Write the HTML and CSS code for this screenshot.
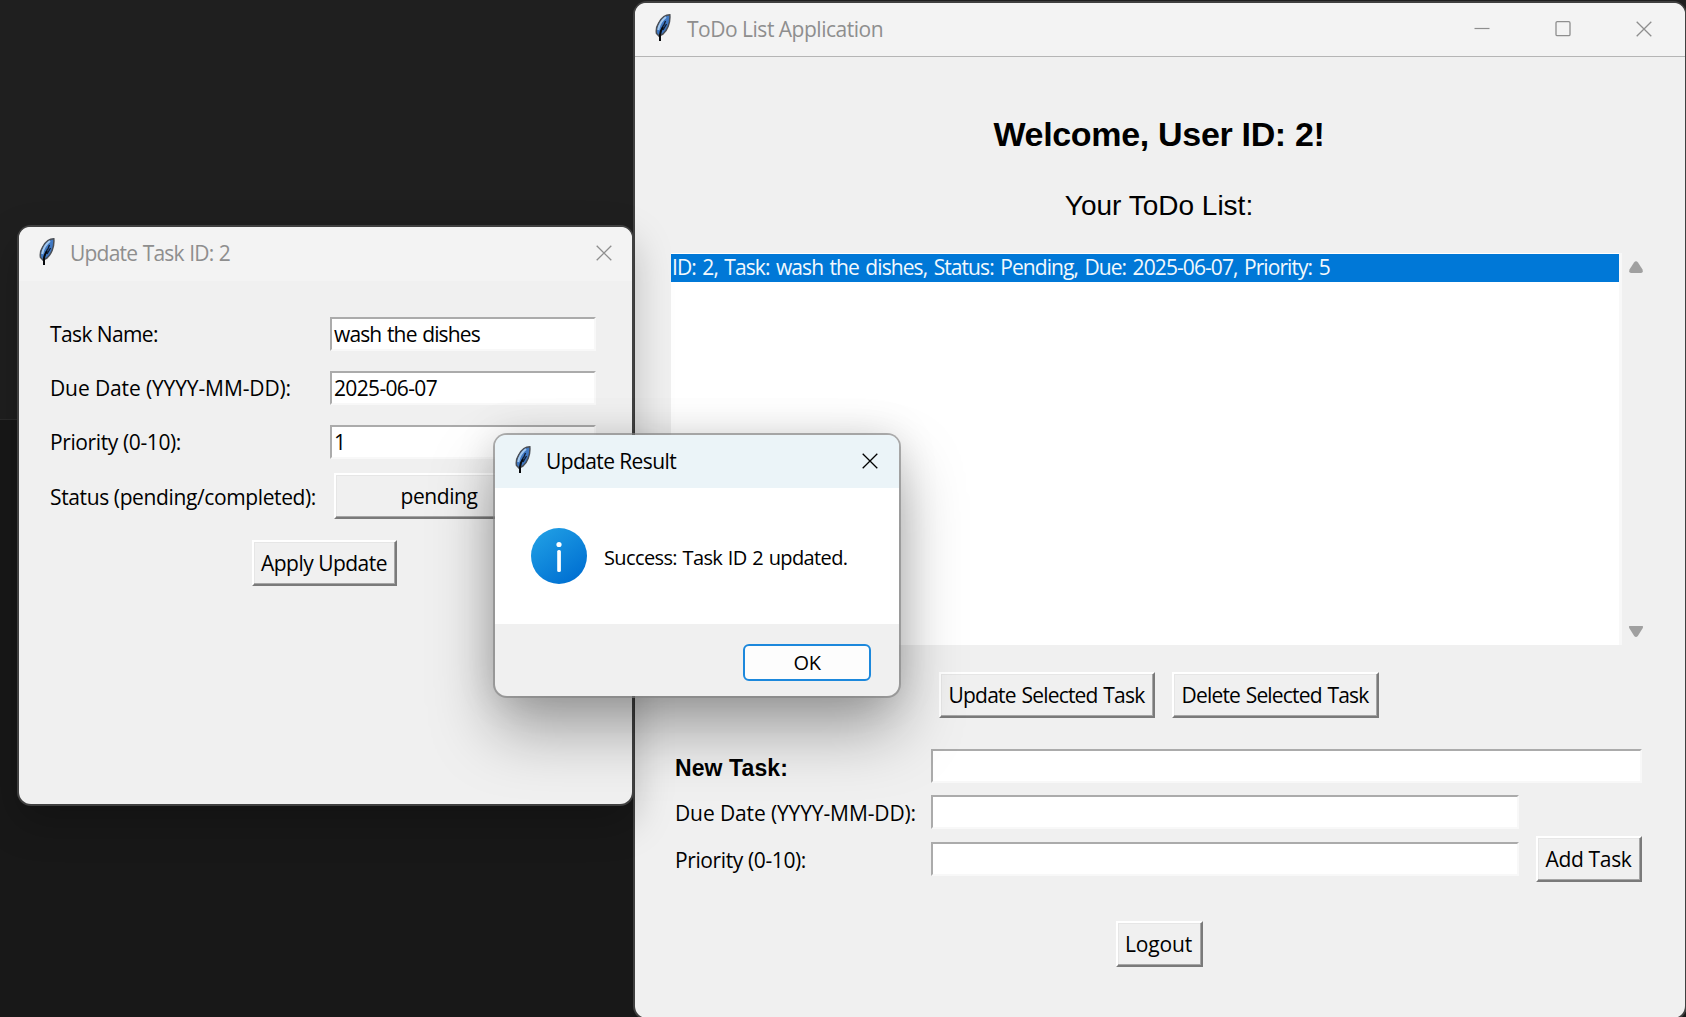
FILE: index.html
```html
<!DOCTYPE html>
<html lang="en">
<head>
<meta charset="utf-8">
<title>ToDo List Application</title>
<link rel="stylesheet" href="styles.css">
</head>
<body>
<svg class="defs" width="0" height="0" aria-hidden="true">
  <defs>
    <symbol id="feather" viewBox="0 0 16 28">
      <path d="M14.800 .8C10.500 .8 6.500 4 4 8.500C1.800 12 .8 16 1.500 19.500L4 22L8 20C12 16.500 15.600 9 14.800 .8Z" fill="#4079c4" stroke="#4a4e55" stroke-width="1.500"/>
      <path d="M11 3C7 6 4 11 3.200 16" fill="none" stroke="#a3c8ee" stroke-width="2"/>
      <path d="M10.500 7L8.500 12M8.500 11L6 17M11.500 10L8 16" fill="none" stroke="#101c30" stroke-width="1.300"/>
      <path d="M8 13C6 16 5 18 5 21V27" fill="none" stroke="#07090c" stroke-width="2"/>
    </symbol>
    <symbol id="close" viewBox="0 0 16 16"><path d="M.7 .7L15.300 15.300M15.300 .7L.7 15.300" fill="none" stroke="currentColor" stroke-width="1.300"/></symbol>
  </defs>
</svg>
<main class="desktop">
  <section class="window app">
    <header class="titlebar">
      <svg class="feather"><use href="#feather"/></svg>
      <span class="title t-app">ToDo List Application</span>
      <svg class="ctl" viewBox="0 0 16 16"><path d="M.5 7.500H15.500" stroke="currentColor" stroke-width="1.200"/></svg>
      <svg class="ctl" viewBox="0 0 16 16"><rect x="1" y=".7" width="14" height="14" rx="1.300" fill="none" stroke="currentColor" stroke-width="1.300"/></svg>
      <svg class="ctl"><use href="#close"/></svg>
    </header>
    <div class="app-body">
      <h1 class="welcome"><span class="t-welcome">Welcome, User ID: 2!</span></h1>
      <h2 class="subtitle">Your ToDo List:</h2>
      <div class="list-row">
        <div class="listbox"><div class="item"><span class="t-item">ID: 2, Task: wash the dishes, Status: Pending, Due: 2025-06-07, Priority: 5</span></div></div>
        <div class="scrollbar">
          <svg viewBox="0 0 16 13"><path d="M6 1.500Q8 -.8 10 1.500L14.500 8.500Q15.500 12 13 12H3Q.5 12 1.500 8.500Z" fill="#a0a0a0"/></svg>
          <svg viewBox="0 0 16 13"><path d="M1.500 1H14.500Q15.500 1 14.800 3L9.800 11Q8 13 6.200 11L1.200 3Q.5 1 1.500 1Z" fill="#a0a0a0"/></svg>
        </div>
      </div>
      <div class="actions">
        <div class="button update"><span class="t-upd">Update Selected Task</span></div>
        <div class="button delete"><span class="t-del">Delete Selected Task</span></div>
      </div>
      <div class="new-task">
        <div class="label strong"><span class="t-new">New Task:</span></div>
        <div class="entry wide"></div>
        <div class="label"><span class="t-due">Due Date (YYYY-MM-DD):</span></div>
        <div class="entry"></div>
        <div class="label priority"><span class="t-pri">Priority (0-10):</span></div>
        <div class="entry"></div>
        <div class="button add"><span class="t-add">Add Task</span></div>
      </div>
      <div class="button logout"><span class="t-log">Logout</span></div>
    </div>
  </section>

  <section class="window editor">
    <header class="titlebar">
      <svg class="feather"><use href="#feather"/></svg>
      <span class="title t-editor">Update Task ID: 2</span>
      <svg class="ctl"><use href="#close"/></svg>
    </header>
    <div class="form">
      <div class="label"><span class="t-name">Task Name:</span></div>
      <div class="entry"><span class="t-wash">wash the dishes</span></div>
      <div class="label"><span class="t-due">Due Date (YYYY-MM-DD):</span></div>
      <div class="entry"><span class="t-date">2025-06-07</span></div>
      <div class="label"><span class="t-pri">Priority (0-10):</span></div>
      <div class="entry">1</div>
      <div class="label status"><span class="t-status">Status (pending/completed):</span></div>
      <div class="button option"><span class="t-pend">pending</span></div>
    </div>
    <div class="button apply"><span class="t-apply">Apply Update</span></div>
  </section>

  <section class="window dialog">
    <header class="titlebar">
      <svg class="feather"><use href="#feather"/></svg>
      <span class="title t-dialog">Update Result</span>
      <svg class="ctl"><use href="#close"/></svg>
    </header>
    <div class="message">
      <svg class="info" viewBox="0 0 56 56">
        <defs><linearGradient id="blue" x1="0" y1="0" x2=".7" y2="1"><stop offset="0" stop-color="#23a3e6"/><stop offset="1" stop-color="#0070d2"/></linearGradient></defs>
        <circle cx="28" cy="28" r="28" fill="url(#blue)"/>
        <circle cx="28" cy="16.500" r="2.600" fill="#fff"/>
        <rect x="26.200" y="22" width="3.700" height="22" rx="1.500" fill="#fff"/>
      </svg>
      <span class="t-success">Success: Task ID 2 updated.</span>
    </div>
    <footer class="footer"><div class="ok"><span class="t-ok">OK</span></div></footer>
  </section>
</main>
</body>
</html>
```
FILE: styles.css
```css
*{box-sizing:border-box}
body{margin:0;background:#1f1f1f;color:#000;font:21px/28px "Open Sans","Noto Sans",sans-serif;overflow:hidden}
.defs{display:none}
span{white-space:nowrap}
.desktop{position:relative;width:1686px;height:1017px;overflow:hidden;background:linear-gradient(#1f1f1f 419px,#2b2b2b 419px,#2b2b2b 420px,#181818 420px)}
.window{position:absolute;background:#f0f0f0;border-radius:12px;display:flex;flex-direction:column}
.titlebar{display:flex;align-items:flex-start;background:#f3f3f3;color:#8e8e8e;border-radius:11px 11px 0 0;flex:none}
.feather{width:16px;height:28px;flex:none;margin:11px 16px 0 20px}
.title{margin-top:12px;margin-right:auto}
.ctl{width:16px;height:16px;flex:none;overflow:visible}

.app{left:635px;top:3px;width:1050px;height:1015px;box-shadow:0 0 0 2px #404040}
.app .titlebar{height:54px;border-bottom:1px solid #b5b5b5;padding-right:33px}
.app .ctl{margin:18px 0 0 65px}
.app-body{padding:0 38px 0 36px;display:flex;flex-direction:column}
.welcome,.subtitle{margin:0;font-family:"Liberation Sans",Arial,sans-serif;text-align:center;color:#000}
.welcome{font-size:34px;line-height:40px;margin-top:57px;font-weight:700}
.subtitle{font-size:28px;line-height:34px;margin-top:35px;font-weight:400}
.list-row{display:flex;margin-top:30px;height:392px}
.listbox{flex:none;width:951px;background:#fff;border-right:3px solid #f8f8f8;padding-top:1px}
.item{height:28px;background:#0078d7;color:#f2f8fd;line-height:27px;padding-left:1px}
.scrollbar{display:flex;flex-direction:column;justify-content:space-between;padding:8px 0 7px 6px}
.scrollbar svg{width:16px;height:13px}
.button{display:flex;align-items:center;justify-content:center;height:46px;border:2px solid;border-color:#fff #7a7a7a #7a7a7a #fff;box-shadow:inset -1px -1px 0 #a6a6a6,inset 1px 1px 0 #e6e6e6;background:#f0f0f0;padding-right:1px}
.actions{display:flex;justify-content:center;gap:17px;margin-top:27px}
.update{width:216px}
.delete{width:207px}
.new-task{display:grid;grid-template-columns:260px 588px 17px 106px;margin-top:31px;grid-template-rows:46px 47px 41px}
.entry{height:34px;background:#fff;border:2px solid;border-color:#ababab #f8f8f8 #f8f8f8 #ababab;line-height:30px;padding-left:2px}
.label{line-height:28px;padding:4px 0 0 4px}
.strong{font:700 23px/28px "Liberation Sans",Arial,sans-serif;padding-top:5px}
.wide{grid-column:2/5}
.priority{grid-column:1}
.add{grid-column:4;width:106px;margin-top:-6px}
.logout{width:87px;align-self:center;margin-top:38px}

.editor{left:19px;top:227px;width:613px;height:577px;box-shadow:0 0 0 2px #404040,0 16px 40px rgba(0,0,0,.25)}
.editor .titlebar{height:54px;padding-right:20px}
.editor .feather,.dialog .feather{margin-right:15px}
.editor .ctl{margin-top:18px}
.form{display:grid;grid-template-columns:280px 266px;grid-template-rows:54px 54px 48px 47px;margin:36px 0 0 31px}
.form .label{padding:3px 0 0}
.form .status{padding-top:10px}
.option{width:262px;margin-left:4px;padding-right:52px}
.apply{width:145px;margin:20px 0 0 233px}

.dialog{left:495px;top:435px;width:404px;height:261px;box-shadow:0 0 0 2px rgba(130,130,130,.65),0 34px 64px rgba(0,0,0,.34),0 0 40px rgba(0,0,0,.13)}
.dialog .titlebar{height:53px;background:#ebf4f8;color:#000;padding-right:21px}
.dialog .ctl{margin-top:18px}
.message{height:136px;background:#fff;display:flex;align-items:center;padding:0 0 0 36px;gap:17px}
.message span{padding-top:3px}
.info{width:56px;height:56px}
.footer{display:flex;justify-content:flex-end;padding:20px 28px 0 0}
.ok{width:128px;height:37px;border:2px solid #1c88dc;border-radius:6px;background:#fdfdfd;display:flex;align-items:center;justify-content:center}

/* Tracking per caption */
.t-app{letter-spacing:-.49px}
.t-welcome{letter-spacing:-.32px}
.t-item{letter-spacing:-.92px;word-spacing:1.9px}
.t-upd{letter-spacing:-.79px;word-spacing:1px}
.t-del{letter-spacing:-.81px;word-spacing:1px}
.t-new{letter-spacing:.1px}
.t-due{letter-spacing:-.12px}
.t-pri{letter-spacing:-.39px}
.t-add{letter-spacing:-.34px}
.t-log{letter-spacing:-.17px}
.t-editor{letter-spacing:-.78px;word-spacing:.7px}
.t-name{letter-spacing:-.6px}
.t-wash{letter-spacing:-.86px;word-spacing:1px}
.t-date{letter-spacing:-.66px}
.t-status{letter-spacing:-.38px}
.t-pend{letter-spacing:-.42px}
.t-apply{letter-spacing:-.52px}
.t-dialog{letter-spacing:-.6px}
.t-success{font-size:20px;letter-spacing:-.62px;word-spacing:1px}
.t-ok{font-size:20px;letter-spacing:-.5px}
```
